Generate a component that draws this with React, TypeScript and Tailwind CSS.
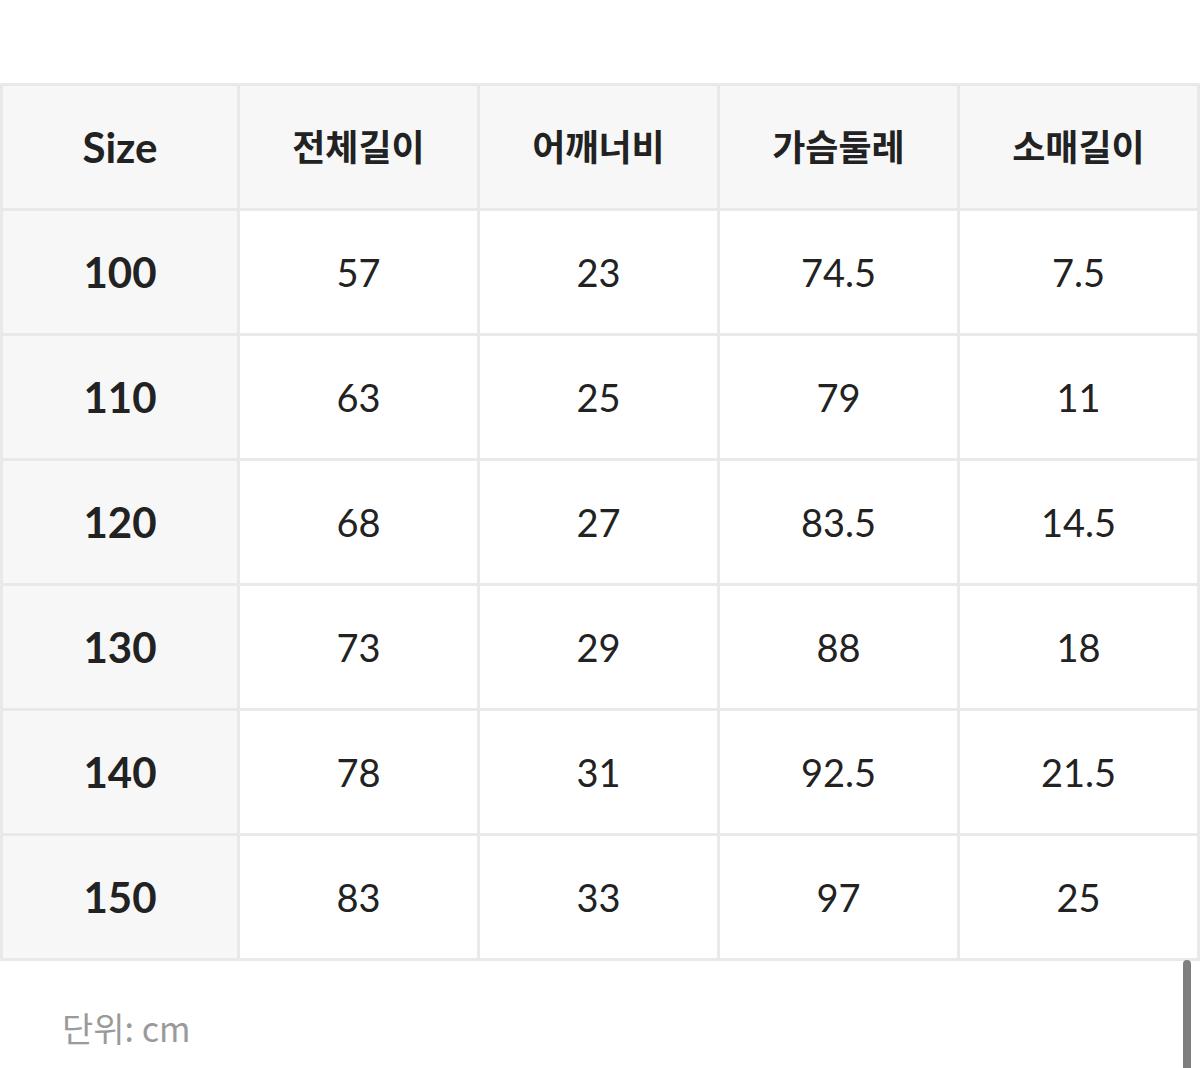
const headers = ["Size", "전체길이", "어깨너비", "가슴둘레", "소매길이"];

const rows: string[][] = [
  ["100", "57", "23", "74.5", "7.5"],
  ["110", "63", "25", "79", "11"],
  ["120", "68", "27", "83.5", "14.5"],
  ["130", "73", "29", "88", "18"],
  ["140", "78", "31", "92.5", "21.5"],
  ["150", "83", "33", "97", "25"],
];

export default function App() {
  return (
    <div
      className="relative h-[1068px] w-[1200px] overflow-hidden bg-white text-[#222]"
      style={{ fontFamily: 'Lato, "Noto Sans CJK KR", sans-serif' }}
    >
      <div className="pt-[83px]">
        <div className="grid grid-cols-[234px_repeat(4,1fr)] gap-[3px] border-[3px] border-[#e9e9e9] bg-[#e9e9e9]">
          {headers.map((h, i) => (
            <div
              key={h}
              className={
                i === 0
                  ? "flex h-[122px] items-center justify-center bg-[#f7f7f7] text-[42px] font-bold"
                  : "flex h-[122px] items-center justify-center bg-[#f7f7f7] text-[36px] font-bold"
              }
            >
              {h}
            </div>
          ))}
          {rows.map((r) =>
            r.map((v, i) => (
              <div
                key={r[0] + "-" + i}
                className={
                  i === 0
                    ? "flex h-[122px] items-center justify-center bg-[#f7f7f7] text-[42px] font-bold"
                    : "flex h-[122px] items-center justify-center bg-white text-[38px]"
                }
              >
                {v}
              </div>
            ))
          )}
        </div>
      </div>

      <p
        className="pl-[62px] pt-[41px] text-[34px] text-[#9a9a9a]"
        style={{ fontFamily: '"Noto Sans CJK KR", sans-serif' }}
      >
        단위: cm
      </p>

      {/* scroll indicator */}
      <div className="absolute left-[1183px] top-[960px] h-[120px] w-[8px] rounded-full bg-[#7f7f7f]" />
    </div>
  );
}
